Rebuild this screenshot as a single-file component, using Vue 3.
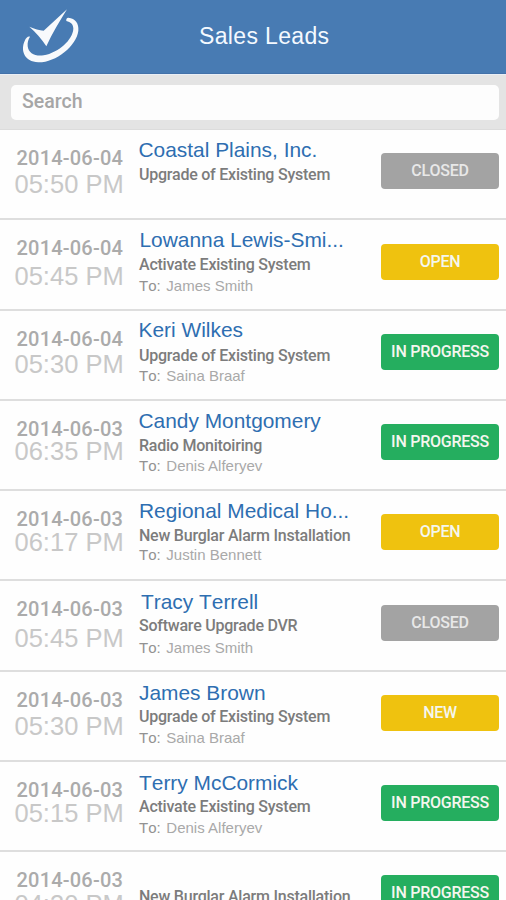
<script setup>
const TIME_TOP = 57.4
const NAME_TOP = 19.3
const TO_TOP = 69.4

const leads = [
  { date: '2014-06-04', time: '05:50 PM', name: 'Coastal Plains, Inc.', job: 'Upgrade of Existing System', to: '', status: 'CLOSED', timeY: 62.9, nameY: 27, toY: 71, nameX: 0.5 },
  { date: '2014-06-04', time: '05:45 PM', name: 'Lowanna Lewis-Smi...', job: 'Activate Existing System', to: 'James Smith', status: 'OPEN', timeY: 65.1, nameY: 27.1, toY: 71.3, nameX: 1.5 },
  { date: '2014-06-04', time: '05:30 PM', name: 'Keri Wilkes', job: 'Upgrade of Existing System', to: 'Saina Braaf', status: 'IN PROGRESS', timeY: 63.2, nameY: 27.2, toY: 71.1, nameX: 0.5 },
  { date: '2014-06-03', time: '06:35 PM', name: 'Candy Montgomery', job: 'Radio Monitoiring', to: 'Denis Alferyev', status: 'IN PROGRESS', timeY: 59.4, nameY: 27.7, toY: 70.7, nameX: 0.5 },
  { date: '2014-06-03', time: '06:17 PM', name: 'Regional Medical Ho...', job: 'New Burglar Alarm Installation', to: 'Justin Bennett', status: 'OPEN', timeY: 60.5, nameY: 27, toY: 69.5, nameX: 1 },
  { date: '2014-06-03', time: '05:45 PM', name: 'Tracy Terrell', job: 'Software Upgrade DVR', to: 'James Smith', status: 'CLOSED', timeY: 66.3, nameY: 28, toY: 72, nameX: 3 },
  { date: '2014-06-03', time: '05:30 PM', name: 'James Brown', job: 'Upgrade of Existing System', to: 'Saina Braaf', status: 'NEW', timeY: 63.8, nameY: 28.3, toY: 71.8, nameX: 1 },
  { date: '2014-06-03', time: '05:15 PM', name: 'Terry McCormick', job: 'Activate Existing System', to: 'Denis Alferyev', status: 'IN PROGRESS', timeY: 60.3, nameY: 29, toY: 71.3, nameX: 1 },
  { date: '2014-06-03', time: '04:30 PM', name: '', job: 'New Burglar Alarm Installation', to: '', status: 'IN PROGRESS', timeY: 61, nameY: 27, toY: 71, nameX: 0 },
]

const tone = { CLOSED: 'grey', OPEN: 'yellow', NEW: 'yellow', 'IN PROGRESS': 'green' }
</script>

<template>
  <div class="screen">
    <header class="bar">
      <svg class="logo" viewBox="60 20 186 174" aria-hidden="true">
        <path d="M88 79 C104 85 118 90 131 91 L201 27 C179 63 157 98 139 138 C125 116 108 96 88 79 Z" />
        <path d="M205 52 C226 54 237 69 235 91 C230 137 166 187 115 186 C73 184 61 150 74 122 C78 112 84 107 90 109 C85 117 82 126 83 138 C85 159 106 169 131 165 C176 156 218 119 220 85 C220 72 212 65 199 62 C198 56 200 52 205 52 Z" />
      </svg>
      <h1>Sales Leads</h1>
    </header>

    <div class="search">
      <div class="field">Search</div>
    </div>

    <ul class="list">
      <li v-for="(lead, i) in leads" :key="i" class="row">
        <div class="when">
          <div class="date">{{ lead.date }}</div>
          <div class="time" :style="{ marginTop: lead.timeY - TIME_TOP + 'px' }">{{ lead.time }}</div>
        </div>
        <div class="info">
          <div class="name-slot" :style="{ paddingTop: lead.nameY - NAME_TOP + 'px', paddingLeft: lead.nameX + 'px' }">
            <div class="name">{{ lead.name }}</div>
          </div>
          <div class="job">{{ lead.job }}</div>
          <div v-if="lead.to" class="to" :style="{ marginTop: lead.toY - TO_TOP + 'px' }"><span>To:</span> {{ lead.to }}</div>
        </div>
        <div class="badge" :class="tone[lead.status]">{{ lead.status }}</div>
      </li>
    </ul>
  </div>
</template>

<style>
body {
  margin: 0;
  background: #fefefe;
}
</style>

<style scoped>
.screen {
  width: 506px;
  height: 900px;
  overflow: hidden;
  background: #fefefe;
  font-family: "Liberation Sans", Arial, sans-serif;
}
.bar {
  box-sizing: border-box;
  height: 75px;
  background: #487bb3;
  border-bottom: 1px solid #e9eef5;
  box-shadow: inset 0 -1px 0 #4371a9;
  display: grid;
  grid-template-columns: 110px 1fr 88px;
  align-items: center;
}
.logo {
  width: 62px;
  height: 58px;
  margin-left: 20px;
  margin-top: -3px;
  fill: #f8fafc;
}
h1 {
  margin: 0;
  font-size: 23px;
  font-weight: 400;
  letter-spacing: 0.35px;
  line-height: 28px;
  color: #f4f9ff;
  padding: 0 0 2px 89px;
}
.search {
  box-sizing: border-box;
  height: 55px;
  background: #e4e4e4;
  border-bottom: 1px solid #dcdcdc;
  padding: 10px 7px 9px 11px;
}
.field {
  height: 35px;
  border-radius: 5px;
  background: #fdfdfd;
  padding-left: 11px;
  font: 500 19.5px/34px Roboto, sans-serif;
  color: #a6a6a6;
}
.list {
  list-style: none;
  margin: 0;
  padding: 0;
}
.row {
  box-sizing: border-box;
  height: 90.25px;
  border-bottom: 2px solid #dedede;
  display: grid;
  grid-template-columns: 124px 243px 118px;
  padding-left: 14px;
  align-items: start;
}
.when {
  padding-top: 18px;
}
.date {
  padding-left: 2.5px;
  font: 500 20px/20px Roboto, sans-serif;
  letter-spacing: 0.2px;
  color: #ababab;
}
.time {
  padding-left: 0.5px;
  font-size: 25.5px;
  line-height: 20px;
  color: #c8c8c8;
  white-space: nowrap;
}
.name-slot {
  box-sizing: border-box;
  height: 35.2px;
}
.name {
  font-size: 20.9px;
  line-height: 24px;
  font-kerning: none;
  color: #2e6eb1;
  white-space: nowrap;
}
.job {
  padding-left: 1px;
  font: 500 16px/20px Roboto, sans-serif;
  letter-spacing: -0.23px;
  color: #7c7c7c;
  white-space: nowrap;
}
.to {
  padding-left: 1px;
  font-size: 15px;
  line-height: 18px;
  color: #a9a9a9;
  white-space: nowrap;
}
.to span {
  margin-right: 1.5px;
  font-kerning: none;
  color: #929292;
}
.badge {
  margin-top: 23.4px;
  height: 36px;
  border-radius: 4px;
  font: 500 16px/36px Roboto, sans-serif;
  letter-spacing: -0.25px;
  color: #f4f6ee;
  text-align: center;
  white-space: nowrap;
}
.grey {
  background: #a3a3a3;
  color: #e8e8e8;
}
.yellow {
  background: #efc20f;
}
.green {
  background: #25ae5f;
}
</style>
